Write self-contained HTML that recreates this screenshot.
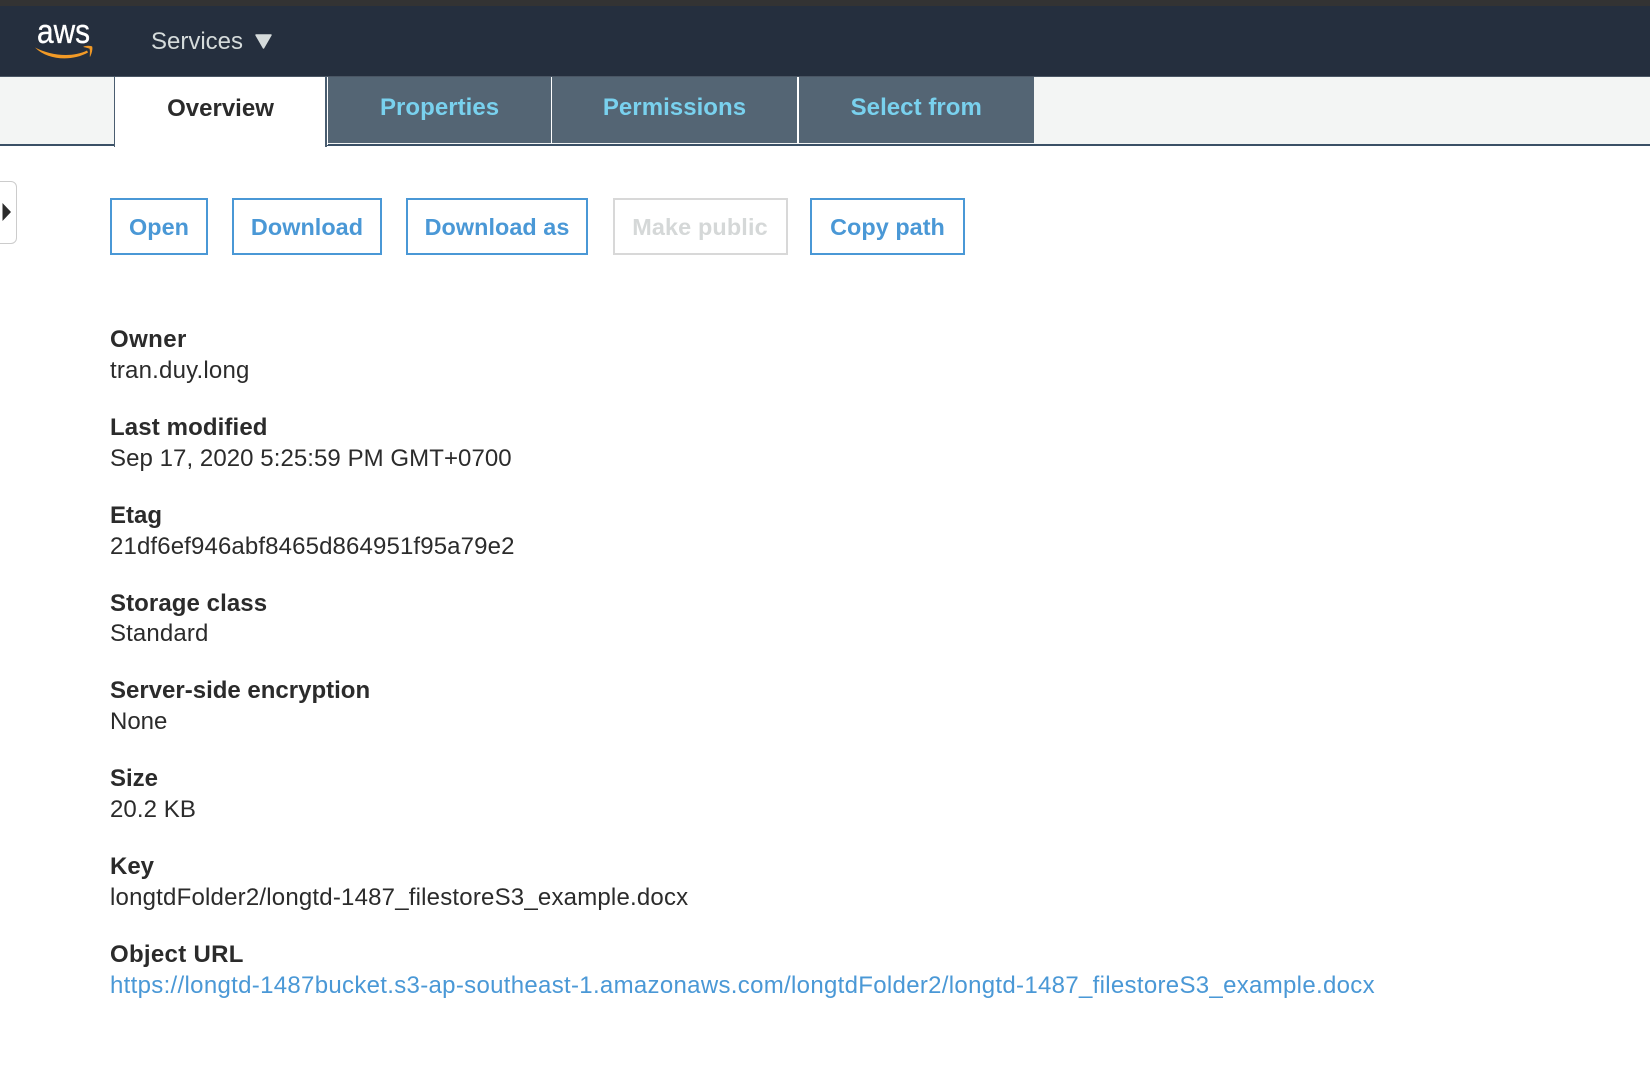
<!DOCTYPE html>
<html lang="en"><head><meta charset="utf-8"><title>S3 object overview</title>
<style>
html,body{margin:0;padding:0;background:#fff}
body{width:1650px;height:1084px;position:relative;overflow:hidden;font-family:"Liberation Sans",Arial,sans-serif;font-size:24px;color:#2b2b2b;filter:blur(.3px)}
.a{position:absolute;white-space:nowrap}
.box{position:absolute;box-sizing:border-box}
.tab{position:absolute;top:76px;height:66.700px;background:#546574;color:#79d1ee;font-weight:bold;text-align:center;line-height:63px;letter-spacing:.05px}
.btn{position:absolute;top:198px;height:57px;box-sizing:border-box;border:2px solid #4a98d6;color:#4a98d6;font-weight:bold;font-size:23.4px;line-height:55px;text-align:center;background:#fff;letter-spacing:.05px}
.l{position:absolute;left:110px;font-weight:bold;line-height:31px;white-space:nowrap}
.v{position:absolute;left:110px;line-height:31px;white-space:nowrap}
</style></head><body>
<div class="box" style="left:0;top:0;width:1650px;height:6px;background:#333"></div>
<div class="box" style="left:0;top:6px;width:1650px;height:70px;background:#252f3e"></div>
<div class="box" style="left:0;top:76px;width:1650px;height:1px;background:#4a5664"></div>
<svg class="a" style="left:0;top:0" width="110" height="80" viewBox="0 0 110 80">
<text x="37" y="43" font-family="Liberation Sans" font-size="34" fill="#fff" stroke="#fff" stroke-width=".35" textLength="53" lengthAdjust="spacingAndGlyphs">aws</text>
<path d="M35 47.500C50 55.500 72 58 87 50.500L88 52.500C72 61.500 48 60.500 35 47.500Z" fill="#f29a26"/>
<path d="M83.500 46.800C86 45.800 90 45.800 92 46.600C92.500 49.500 91.500 53.500 90 56.500C90.200 53 90.300 50.500 89.800 48.500C88 47.900 86 47.300 83.500 46.800Z" fill="#f29a26" stroke="#f29a26" stroke-width=".5"/>
</svg>
<div class="a" style="left:151px;top:26px;line-height:31px;color:#d5dbdb">Services</div>
<svg class="a" style="left:254px;top:33px" width="19" height="17"><path d="M2 2H17L9.500 15Z" fill="#d5dbdb" stroke="#d5dbdb" stroke-width="1.500" stroke-linejoin="round"/></svg>

<div class="box" style="left:0;top:77px;width:1650px;height:67.500px;background:#f3f5f4"></div>
<div class="box" style="left:0;top:144.300px;width:1650px;height:1.700px;background:#3a5066"></div>
<div class="box" style="left:114px;top:76.500px;width:213px;height:70px;background:#fff;border-left:1.500px solid #4a5d70;border-right:2px solid #4a5d70"></div>
<div class="a" style="left:114px;width:213px;top:93px;line-height:31px;font-weight:bold;text-align:center">Overview</div>
<div class="box" style="left:327px;top:77px;width:1.200px;height:67.500px;background:#fff"></div>
<div class="tab" style="left:328.200px;width:222.800px;top:77px;height:65.700px;line-height:61px">Properties</div>
<div class="box" style="left:551px;top:77px;width:1px;height:65.700px;background:#fff"></div>
<div class="tab" style="left:552px;width:245px;top:77px;height:65.700px;line-height:61px">Permissions</div>
<div class="box" style="left:797px;top:77px;width:1.500px;height:65.700px;background:#fff"></div>
<div class="tab" style="left:798.500px;width:235.500px;top:77px;height:65.700px;line-height:61px">Select from</div>

<div class="box" style="left:-6px;top:181px;width:23px;height:63px;border:1.500px solid #ccc;border-radius:6px;background:#fff"></div>
<svg class="a" style="left:2px;top:203px" width="10" height="18"><path d="M0.500 0L9 9L0.500 18Z" fill="#2b2b2b"/></svg>

<div class="btn" style="left:110px;width:98px">Open</div>
<div class="btn" style="left:232px;width:150px">Download</div>
<div class="btn" style="left:406px;width:182px">Download as</div>
<div class="btn" style="left:612.500px;width:175px;border-color:#d8d8d8;color:#d5d8d8;letter-spacing:.15px">Make public</div>
<div class="btn" style="left:810px;width:155px">Copy path</div>

<div class="l" style="top:324px;letter-spacing:.4px">Owner</div><div class="v" style="top:355px;letter-spacing:.2px">tran.duy.long</div>
<div class="l" style="top:411.500px;letter-spacing:.12px">Last modified</div><div class="v" style="top:442.500px;letter-spacing:.065px">Sep 17, 2020 5:25:59 PM GMT+0700</div>
<div class="l" style="top:499.500px">Etag</div><div class="v" style="top:530.500px;letter-spacing:.13px">21df6ef946abf8465d864951f95a79e2</div>
<div class="l" style="top:588px;letter-spacing:.08px">Storage class</div><div class="v" style="top:618px;letter-spacing:.13px">Standard</div>
<div class="l" style="top:675px">Server-side encryption</div><div class="v" style="top:706px">None</div>
<div class="l" style="top:762.500px">Size</div><div class="v" style="top:793.500px;letter-spacing:.08px">20.2 KB</div>
<div class="l" style="top:850.500px">Key</div><div class="v" style="top:881.500px;letter-spacing:.2px">longtdFolder2/longtd-1487_filestoreS3_example.docx</div>
<div class="l" style="top:938.500px;letter-spacing:.3px">Object URL</div><div class="v" style="top:970px;color:#4a98d6;letter-spacing:.31px">https://longtd-1487bucket.s3-ap-southeast-1.amazonaws.com/longtdFolder2/longtd-1487_filestoreS3_example.docx</div>
</body></html>
